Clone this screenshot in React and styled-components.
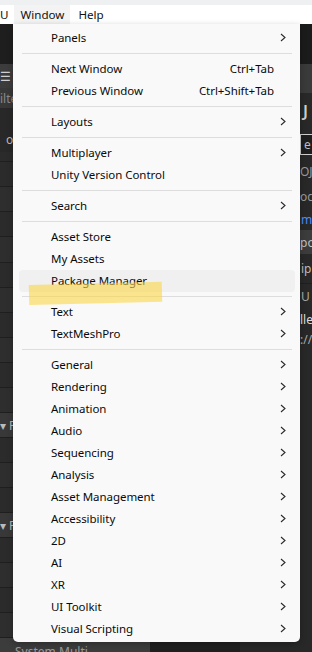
import React from "react";
import styled, { createGlobalStyle } from "styled-components";

const GlobalStyle = createGlobalStyle`
  html, body { margin: 0; padding: 0; background: #282828; }
  body { width: 312px; height: 652px; overflow: hidden; font-family: "Segoe UI", "Noto Sans", sans-serif; }
  #root { width: 312px; height: 652px; }
`;

const Screen = styled.div`
  position: relative;
  width: 312px;
  height: 652px;
  overflow: hidden;
  display: flex;
  flex-direction: column;
  background: #282828;
`;

const TitleStrip = styled.div`
  height: 5px;
  background: #eff0f2;
  flex: none;
`;

const MenuBar = styled.div`
  height: 19px;
  flex: none;
  background: #ffffff;
  display: flex;
  align-items: center;
  font-size: 11.6px;
  color: #111;
`;

const MenuTitle = styled.div`
  height: 19px;
  display: flex;
  align-items: center;
  padding: 0 ${(p) => p.$pad}px;
  margin-left: ${(p) => p.$ml || 0}px;
  background: ${(p) => (p.$active ? "#f3f3f3" : "transparent")};
`;

const Workspace = styled.div`
  flex: 1;
  display: flex;
  min-height: 0;
`;

const LeftPanel = styled.div`
  width: 150px;
  flex: none;
  display: flex;
  flex-direction: column;
  background: #2b2b2b;
`;

const Block = styled.div`
  height: ${(p) => p.$h}px;
  flex: none;
  background: ${(p) => p.$bg};
  border-bottom: ${(p) => (p.$line ? "1px solid #1f1f1f" : "none")};
  box-sizing: border-box;
  display: flex;
  align-items: ${(p) => p.$align || "center"};
  padding-left: ${(p) => p.$pl || 0}px;
  padding-top: ${(p) => p.$pt || 0}px;
  color: ${(p) => p.$color || "#9a9a9a"};
  font-size: ${(p) => p.$fs || 12}px;
  font-weight: ${(p) => p.$fw || 400};
  white-space: nowrap;
  overflow: hidden;
`;

const Center = styled.div`
  flex: 1;
  background: #202020;
`;

const RightPanel = styled.div`
  width: 72px;
  flex: none;
  display: flex;
  flex-direction: column;
  background: #282828;
`;

const Chip = styled.span`
  border: 1px solid ${(p) => p.$border || "transparent"};
  background: ${(p) => p.$bg || "transparent"};
  padding: 1px 3px;
  color: ${(p) => p.$color || "#bdbdbd"};
`;

const Menu = styled.div`
  position: absolute;
  left: 13px;
  top: 24px;
  width: 287px;
  height: 618px;
  box-sizing: border-box;
  padding-top: 3px;
  background: #f9f9f9;
  border-radius: 0 0 5px 5px;
  box-shadow: 0 2px 6px rgba(0, 0, 0, 0.25);
  display: flex;
  flex-direction: column;
  font-size: 11.5px;
  letter-spacing: -0.05px;
  color: #0a0a0a;
`;

const Row = styled.div`
  height: 22px;
  flex: none;
  box-sizing: border-box;
  margin: 0 5px 0 6px;
  padding: 0 9px 1px 32px;
  display: flex;
  align-items: center;
  border-radius: 4px;
  background: ${(p) => (p.$hover ? "#f0f0f0" : "transparent")};
`;

const Label = styled.span`
  flex: 1;
  white-space: nowrap;
`;

const Shortcut = styled.span`
  white-space: nowrap;
`;

const ArrowCell = styled.span`
  width: 12px;
  display: flex;
  justify-content: flex-end;
  align-items: center;
`;

const Separator = styled.div`
  height: 9px;
  flex: none;
  margin: 0 8px 0 9px;
  display: flex;
  align-items: center;
  &::after {
    content: "";
    display: block;
    width: 100%;
    height: 1px;
    background: #dddddd;
  }
`;

const Highlighter = styled.div`
  position: absolute;
  left: 29px;
  top: 285px;
  width: 133px;
  height: 20px;
  background: rgba(251, 214, 70, 0.6);
  transform: rotate(-1.4deg);
  transform-origin: left center;
`;

const Chevron = () => (
  <svg width="6" height="9" viewBox="0 0 6 9">
    <path d="M1 1 L5 4.5 L1 8" fill="none" stroke="#2a2a2a" strokeWidth="1.1" />
  </svg>
);

const items = [
  { label: "Panels", sub: true },
  "sep",
  { label: "Next Window", shortcut: "Ctrl+Tab" },
  { label: "Previous Window", shortcut: "Ctrl+Shift+Tab" },
  "sep",
  { label: "Layouts", sub: true },
  "sep",
  { label: "Multiplayer", sub: true },
  { label: "Unity Version Control" },
  "sep",
  { label: "Search", sub: true },
  "sep",
  { label: "Asset Store" },
  { label: "My Assets" },
  { label: "Package Manager", hover: true },
  "sep",
  { label: "Text", sub: true },
  { label: "TextMeshPro", sub: true },
  "sep",
  { label: "General", sub: true },
  { label: "Rendering", sub: true },
  { label: "Animation", sub: true },
  { label: "Audio", sub: true },
  { label: "Sequencing", sub: true },
  { label: "Analysis", sub: true },
  { label: "Asset Management", sub: true },
  { label: "Accessibility", sub: true },
  { label: "2D", sub: true },
  { label: "AI", sub: true },
  { label: "XR", sub: true },
  { label: "UI Toolkit", sub: true },
  { label: "Visual Scripting", sub: true },
];

const leftBlocks = [
  { h: 40, bg: "#1e1e1e" },
  { h: 24, bg: "#3c3c3c", text: "☰ P", color: "#d0d0d0", pl: 0 },
  { h: 20, bg: "#383838", text: "ilte", color: "#8a8a8a", pl: 0 },
  { h: 18, bg: "#282828" },
  { h: 26, bg: "#282828", text: "o", color: "#bbb", pl: 6 },
  { h: 10, bg: "#2b2b2b", line: true },
  { h: 25, bg: "#2b2b2b", line: true },
  { h: 25, bg: "#2e2e2e", line: true },
  { h: 25, bg: "#2b2b2b", line: true },
  { h: 26, bg: "#2e2e2e", line: true },
  { h: 25, bg: "#2b2b2b", line: true },
  { h: 25, bg: "#2e2e2e", line: true },
  { h: 25, bg: "#2b2b2b", line: true },
  { h: 25, bg: "#2e2e2e", line: true },
  { h: 25, bg: "#2b2b2b", line: true },
  { h: 25, bg: "#2e2e2e", line: true },
  { h: 25, bg: "#383838", line: true, text: "▾ P", color: "#bbb" },
  { h: 25, bg: "#2b2b2b", line: true },
  { h: 25, bg: "#2e2e2e", line: true },
  { h: 25, bg: "#2b2b2b", line: true },
  { h: 25, bg: "#383838", line: true, text: "▾ P", color: "#bbb" },
  { h: 25, bg: "#2b2b2b", line: true },
  { h: 25, bg: "#2e2e2e", line: true },
  { h: 25, bg: "#2b2b2b", line: true },
  { h: 25, bg: "#2e2e2e", line: true },
  { h: 30, bg: "#3c3c3c", text: "System.Multi", color: "#9a9a9a", pl: 15, pt: 5, align: "flex-start" },
];

const rightBlocks = [
  { h: 40, bg: "#1b1b1b" },
  { h: 29, bg: "#3a3a3a" },
  { h: 36, bg: "#282828", text: "J", color: "#cfcfcf", fs: 16, fw: 600, pl: 63 },
  { h: 30, bg: "#282828", chip: true, pl: 60 },
  { h: 25, bg: "#282828", text: "OJ", color: "#9a9a9a", pl: 60 },
  { h: 24, bg: "#282828", text: "oc", color: "#9a9a9a", pl: 60 },
  { h: 22, bg: "#282828", text: "m", color: "#4c8dff", pl: 61 },
  { h: 24, bg: "#3c3c3c", text: "po", color: "#c0c0c0", pl: 60 },
  { h: 30, bg: "#282828", text: "ip", color: "#bbb", pl: 61, line: true },
  { h: 24, bg: "#282828", text: "U", color: "#aaa", pl: 61 },
  { h: 22, bg: "#282828", text: "lle", color: "#ddd", pl: 60 },
  { h: 18, bg: "#282828", text: "://", color: "#aaa", pl: 60 },
  { h: 284, bg: "#282828" },
];

export default function App() {
  return (
    <>
      <GlobalStyle />
      <Screen>
        <TitleStrip />
        <MenuBar>
          <MenuTitle $pad={0} $ml={0}>U</MenuTitle>
          <MenuTitle $pad={6} $ml={6} $active>Window</MenuTitle>
          <MenuTitle $pad={8} $ml={0}>Help</MenuTitle>
        </MenuBar>
        <Workspace>
          <LeftPanel>
            {leftBlocks.map((b, i) => (
              <Block
                key={i}
                $h={b.h}
                $bg={b.bg}
                $line={b.line}
                $color={b.color}
                $pl={b.pl}
                $pt={b.pt}
                $align={b.align}
              >
                {b.text}
              </Block>
            ))}
          </LeftPanel>
          <Center />
          <RightPanel>
            {rightBlocks.map((b, i) => (
              <Block
                key={i}
                $h={b.h}
                $bg={b.bg}
                $line={b.line}
                $color={b.color}
                $pl={b.pl}
                $fs={b.fs}
                $fw={b.fw}
              >
                {b.chip ? <Chip $border="#cfcfcf" $bg="#1e1e1e">e</Chip> : b.text}
              </Block>
            ))}
          </RightPanel>
        </Workspace>
        <Menu>
          {items.map((it, i) =>
            it === "sep" ? (
              <Separator key={i} />
            ) : (
              <Row key={i} $hover={it.hover}>
                <Label>{it.label}</Label>
                {it.shortcut && <Shortcut>{it.shortcut}</Shortcut>}
                <ArrowCell>{it.sub && <Chevron />}</ArrowCell>
              </Row>
            )
          )}
        </Menu>
        <Highlighter />
      </Screen>
    </>
  );
}
